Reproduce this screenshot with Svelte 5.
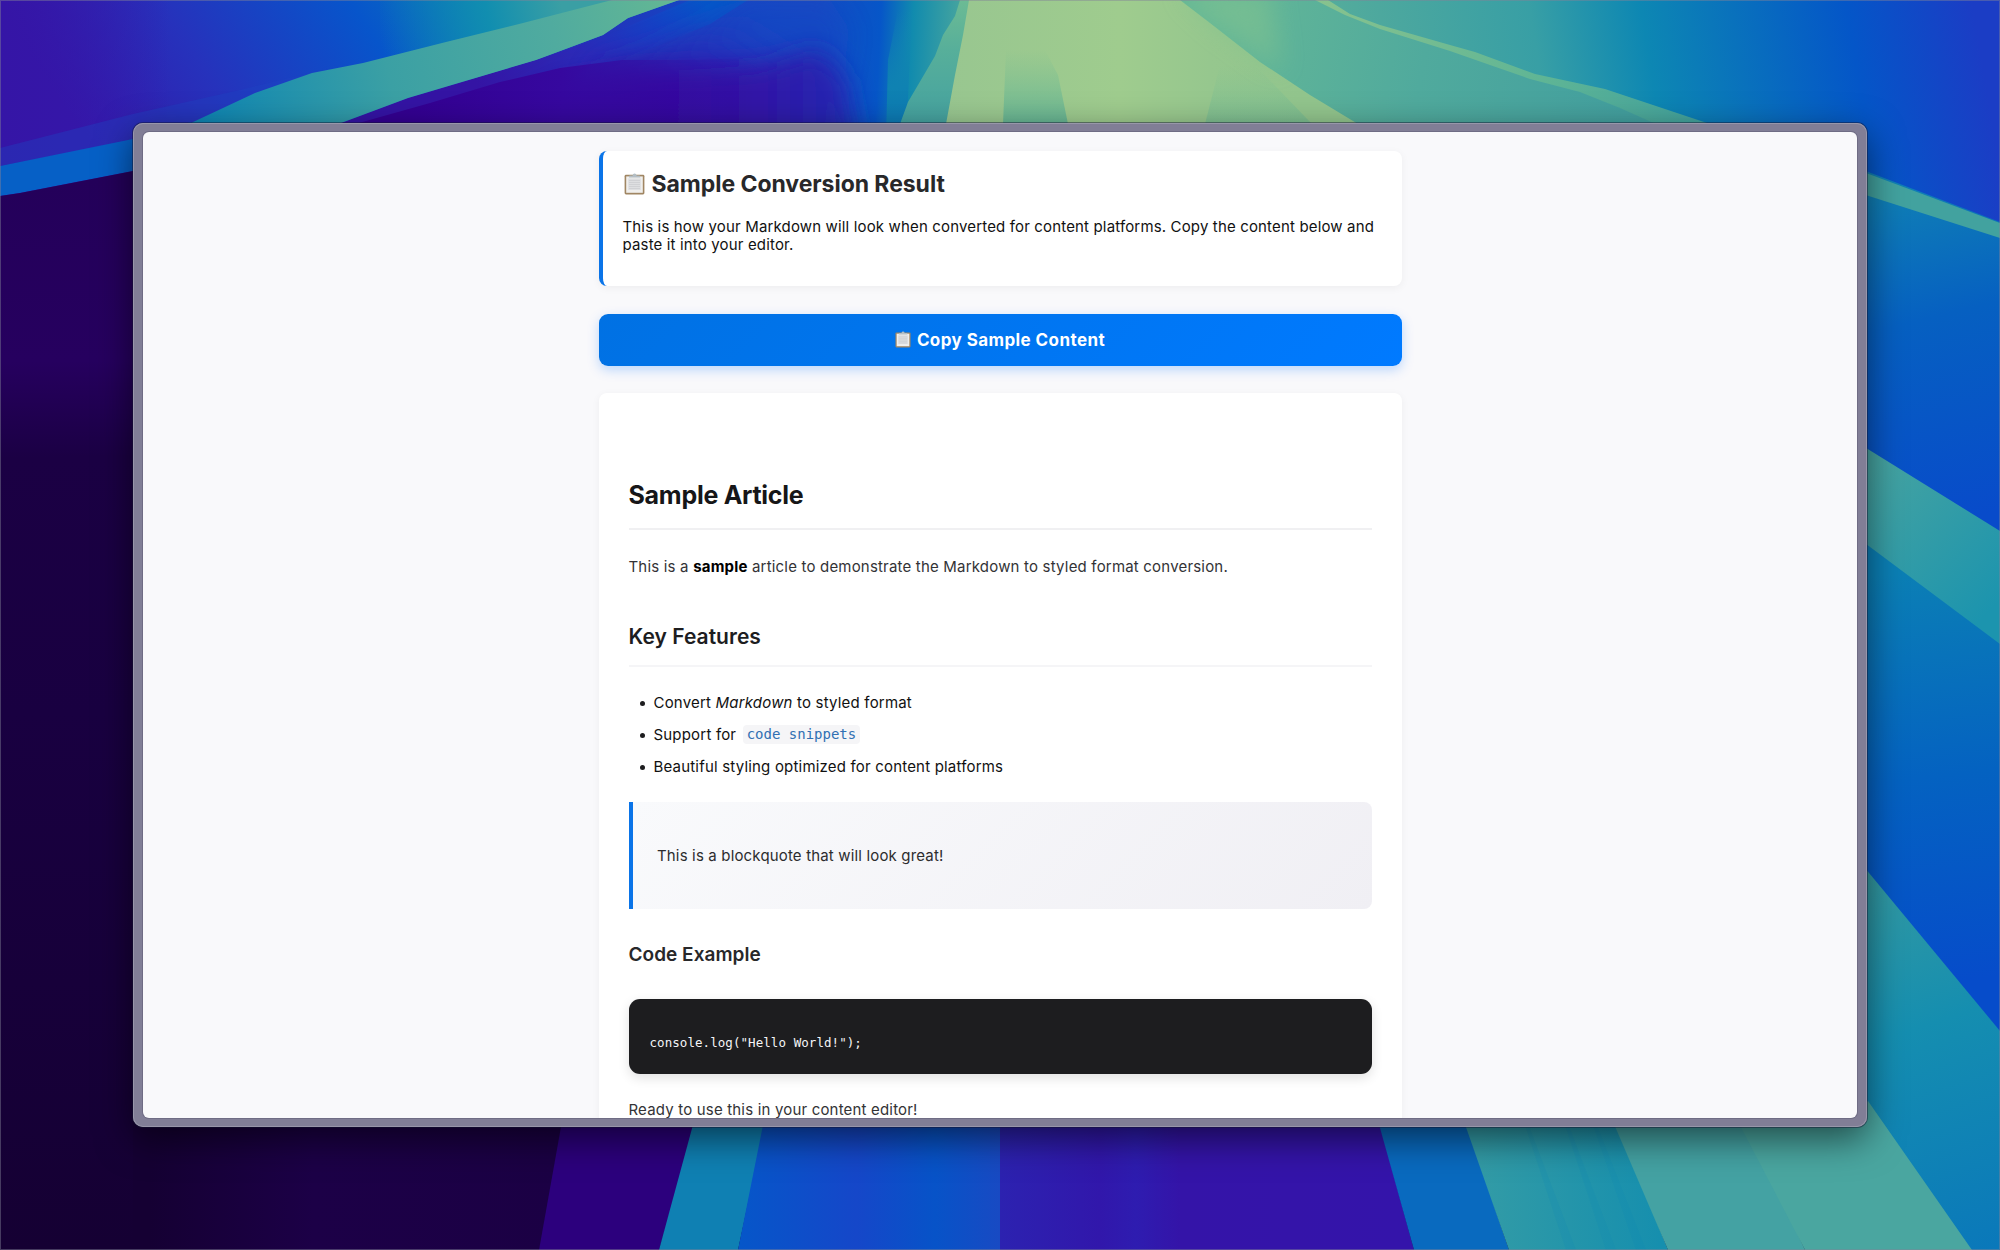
<script>
  const streaks = [
    [1520, 1570], [1560, 1610], [1588, 1640]
  ];
</script>

{#snippet clipboard()}
  <svg class="clip" viewBox="0 0 21 22" aria-hidden="true">
    <rect x="0.6" y="1.8" width="19.8" height="19.6" rx="1.4" fill="#a08663" />
    <rect x="2.2" y="3.4" width="16.6" height="16.4" fill="#f0efed" />
    <rect x="4.2" y="5.4" width="12.6" height="11.6" fill="#dedfe1" />
    <path d="M5 7.5h11M5 9.5h11M5 11.5h11M5 13.5h11M5 15.5h11" stroke="#d0d1d4" stroke-width="1" />
    <path d="M5 4.6V3.2q0-.8.9-.8h2.7q.2-1.8 2-1.8t2 1.8h2.7q.9 0 .9.8v1.4z" fill="#b4bec4" />
  </svg>
{/snippet}

<div class="desktop">
  <svg class="wallpaper" viewBox="0 0 2000 1250" preserveAspectRatio="none" aria-hidden="true">
    <defs>
      <linearGradient id="nw" gradientUnits="userSpaceOnUse" x1="120" y1="190" x2="500" y2="-60">
        <stop offset="0" stop-color="#3518ab" /><stop offset=".3" stop-color="#2632bc" />
        <stop offset=".65" stop-color="#0755cb" /><stop offset="1" stop-color="#0c86b2" />
      </linearGradient>
      <linearGradient id="nwleft"><stop offset="0" stop-color="#3515a6" /><stop offset="1" stop-color="#3515a6" stop-opacity="0" /></linearGradient>
      <linearGradient id="nwteal" gradientUnits="userSpaceOnUse" x1="380" y1="40" x2="560" y2="0">
        <stop offset="0" stop-color="#0c86b2" stop-opacity="0" /><stop offset=".6" stop-color="#118eb0" /><stop offset="1" stop-color="#3a9fa4" />
      </linearGradient>
      <linearGradient id="band" gradientUnits="userSpaceOnUse" x1="200" y1="120" x2="670" y2="0">
        <stop offset="0" stop-color="#0e86b4" /><stop offset=".4" stop-color="#3ba0a4" />
        <stop offset=".75" stop-color="#50ab9f" /><stop offset="1" stop-color="#63b794" />
      </linearGradient>
      <linearGradient id="mid" gradientUnits="userSpaceOnUse" x1="600" y1="0" x2="960" y2="18">
        <stop offset="0" stop-color="#2332bb" /><stop offset=".25" stop-color="#1546c3" />
        <stop offset=".6" stop-color="#164ac2" /><stop offset=".78" stop-color="#0656c8" />
        <stop offset=".87" stop-color="#118bae" /><stop offset="1" stop-color="#45a49f" />
      </linearGradient>
      <linearGradient id="fan" gradientUnits="userSpaceOnUse" x1="480" y1="90" x2="700" y2="-10">
        <stop offset="0" stop-color="#3414a4" /><stop offset=".45" stop-color="#2b2ab8" />
        <stop offset=".75" stop-color="#1740c4" /><stop offset="1" stop-color="#0656c8" />
      </linearGradient>
      <linearGradient id="sheet" gradientUnits="userSpaceOnUse" x1="650" y1="100" x2="720" y2="-10">
        <stop offset="0" stop-color="#3216a8" /><stop offset=".55" stop-color="#2a28b7" /><stop offset="1" stop-color="#1546c5" stop-opacity=".6" />
      </linearGradient>
      <linearGradient id="deep" gradientUnits="userSpaceOnUse" x1="400" y1="0" x2="760" y2="0">
        <stop offset="0" stop-color="#330091" /><stop offset=".45" stop-color="#36089f" /><stop offset="1" stop-color="#3216a8" stop-opacity="0" />
      </linearGradient>
      <linearGradient id="violet" gradientUnits="userSpaceOnUse" x1="340" y1="0" x2="890" y2="0">
        <stop offset="0" stop-color="#2e0085" /><stop offset=".55" stop-color="#36009a" />
        <stop offset=".75" stop-color="#3214a6" /><stop offset=".92" stop-color="#2429b3" />
        <stop offset="1" stop-color="#154bc3" />
      </linearGradient>
      <linearGradient id="inlet" x1="0" y1="0" x2="0" y2="1"><stop offset="0" stop-color="#128aae" stop-opacity="0" /><stop offset=".6" stop-color="#0f82b2" /><stop offset="1" stop-color="#0b76b6" /></linearGradient>
      <linearGradient id="strip" x1="0" y1="0" x2="0" y2="1"><stop offset="0" stop-color="#6cbb94" /><stop offset=".4" stop-color="#57af9a" /><stop offset="1" stop-color="#45a2a0" /></linearGradient>
      <linearGradient id="ne" gradientUnits="userSpaceOnUse" x1="1190" y1="60" x2="1960" y2="-70">
        <stop offset="0" stop-color="#68b996" /><stop offset=".25" stop-color="#4da89e" />
        <stop offset=".44" stop-color="#389fa5" /><stop offset=".58" stop-color="#0d87b3" />
        <stop offset=".84" stop-color="#0456c8" /><stop offset="1" stop-color="#1b3dc5" />
      </linearGradient>
      <linearGradient id="under" gradientUnits="userSpaceOnUse" x1="1200" y1="40" x2="1640" y2="120">
        <stop offset="0" stop-color="#66b896" /><stop offset=".5" stop-color="#50aa9d" /><stop offset="1" stop-color="#429f9f" />
      </linearGradient>
      <linearGradient id="green" gradientUnits="userSpaceOnUse" x1="940" y1="0" x2="1300" y2="0">
        <stop offset="0" stop-color="#98c690" /><stop offset=".5" stop-color="#9fcc8e" />
        <stop offset=".75" stop-color="#96c78e" /><stop offset="1" stop-color="#92c58d" />
      </linearGradient>
      <linearGradient id="patch" x1="0" y1="0" x2="0" y2="1">
        <stop offset="0" stop-color="#78bf92" stop-opacity="0" /><stop offset="1" stop-color="#66b594" />
      </linearGradient>
      <linearGradient id="line" gradientUnits="userSpaceOnUse" x1="1315" y1="0" x2="1700" y2="120">
        <stop offset="0" stop-color="#88c38e" /><stop offset=".6" stop-color="#5fb595" /><stop offset="1" stop-color="#42a39e" />
      </linearGradient>
      <linearGradient id="west" gradientUnits="userSpaceOnUse" x1="0" y1="180" x2="20" y2="1250">
        <stop offset="0" stop-color="#24005a" /><stop offset=".17" stop-color="#26005f" />
        <stop offset=".26" stop-color="#1b0044" /><stop offset=".5" stop-color="#190041" />
        <stop offset="1" stop-color="#150033" />
      </linearGradient>
      <linearGradient id="e1" gradientUnits="userSpaceOnUse" x1="1880" y1="190" x2="1960" y2="520">
        <stop offset="0" stop-color="#1080b5" /><stop offset=".4" stop-color="#0660c1" /><stop offset="1" stop-color="#084bca" />
      </linearGradient>
      <linearGradient id="e2" gradientUnits="userSpaceOnUse" x1="1870" y1="470" x2="2000" y2="600">
        <stop offset="0" stop-color="#45a3a1" /><stop offset="1" stop-color="#1c94ae" />
      </linearGradient>
      <linearGradient id="e3" gradientUnits="userSpaceOnUse" x1="1920" y1="570" x2="1970" y2="980">
        <stop offset="0" stop-color="#0b7fb5" /><stop offset=".5" stop-color="#0462c1" /><stop offset="1" stop-color="#064cca" />
      </linearGradient>
      <linearGradient id="e4" gradientUnits="userSpaceOnUse" x1="1868" y1="880" x2="1990" y2="1250">
        <stop offset="0" stop-color="#3299a2" /><stop offset=".4" stop-color="#158eb0" /><stop offset="1" stop-color="#0a78ba" />
      </linearGradient>
      <linearGradient id="s1" gradientUnits="userSpaceOnUse" x1="150" y1="0" x2="560" y2="0">
        <stop offset="0" stop-color="#150033" /><stop offset=".4" stop-color="#1c0047" /><stop offset="1" stop-color="#1b0044" />
      </linearGradient>
      <linearGradient id="s2" gradientUnits="userSpaceOnUse" x1="740" y1="0" x2="1000" y2="0">
        <stop offset="0" stop-color="#0656c9" /><stop offset=".45" stop-color="#1547c9" />
        <stop offset=".75" stop-color="#0753c8" /><stop offset="1" stop-color="#184ac3" />
      </linearGradient>
      <linearGradient id="s3" gradientUnits="userSpaceOnUse" x1="1000" y1="0" x2="1400" y2="0">
        <stop offset="0" stop-color="#2c22b0" /><stop offset=".25" stop-color="#3117ab" />
        <stop offset=".34" stop-color="#2e1cb0" /><stop offset=".45" stop-color="#3414a8" /><stop offset="1" stop-color="#3414aa" />
      </linearGradient>
      <linearGradient id="s4" gradientUnits="userSpaceOnUse" x1="1480" y1="0" x2="1660" y2="0">
        <stop offset="0" stop-color="#329ba6" /><stop offset="1" stop-color="#168fae" />
      </linearGradient>
      <filter id="soft" x="-30%" y="-30%" width="160%" height="160%"><feGaussianBlur stdDeviation="12" /></filter>
    </defs>

    <!-- upper left -->
    <rect width="700" height="240" fill="url(#nw)" />
    <rect x="380" width="300" height="80" fill="url(#nwteal)" />
    <rect width="170" height="240" fill="url(#nwleft)" />
    <path d="M0 148L133 114L240 90L330 68L191 123L133 140L0 166Z" fill="#1f44c4" opacity=".4" />
    <path d="M0 166L133 139L191 122V165L133 171L20 193L0 196Z" fill="#0660c6" />

    <!-- centre fan -->
    <path d="M679 0L628 18L603 35L536 60L408 98L341 123V140H970V0Z" fill="url(#mid)" />
    <path d="M748 0L710 24L640 53L590 65L500 140H341V123L408 98L536 60L603 37L690 0Z" fill="url(#fan)" />
    <path d="M748 0L710 24L640 53L600 62L560 140H830L850 30L830 0Z" fill="url(#sheet)" opacity=".7" filter="url(#soft)" />
    <path d="M440 150L560 85L640 72L760 66L820 50L846 80L864 180H400Z" fill="url(#violet)" filter="url(#soft)" />
    <path d="M320 150L341 128L430 103L500 82L560 68L622 60L690 60L765 58V150Z" fill="url(#deep)" />
    <path d="M898 10L912 10L906 140H886L888 60Z" fill="url(#inlet)" />
    <path d="M679 0H612L523 23L446 42L363 63L312 73L255 93L191 123L150 150H300L341 123L408 98L536 60L603 35L628 18L679 0Z" fill="url(#band)" />
    <path d="M960 0L955 16L943 35L935 56L918 85L908 102L900 124H980V0Z" fill="url(#strip)" />

    <!-- upper right -->
    <path d="M1160 0H2000V540H1200Z" fill="url(#ne)" />
    <path d="M1180 0H1315L1380 26L1440 44L1500 65L1580 91L1660 124H1200Z" fill="url(#under)" />
    <path d="M1328 0L1350 14L1380 25L1450 45L1475 52L1535 74L1605 89L1650 104L1710 124H1656L1620 108L1580 92L1530 79L1490 65L1450 51L1380 29L1345 15L1315 0Z" fill="url(#line)" />
    <path d="M969 0H1180L1210 23L1260 62L1310 95L1358 124H946L955 75L963 35Z" fill="url(#green)" />
    <path d="M1180 -10H1270L1280 70L1215 23Z" fill="#80c290" opacity=".6" filter="url(#soft)" />
    <path d="M1006 50H1045L1058 75L1068 124H1003Z" fill="url(#patch)" />
    <path d="M1220 65H1255L1312 124H1205Z" fill="url(#patch)" opacity=".5" />

    <!-- right side -->
    <path d="M1850 165L2000 222V560L1850 460Z" fill="url(#e1)" />
    <path d="M1850 167L2000 223V238L1850 190Z" fill="#42a29f" />
    <path d="M1850 438L2000 531V660L1850 550Z" fill="url(#e2)" />
    <path d="M1850 532L2000 644V1060H1850Z" fill="url(#e3)" />
    <path d="M1850 850L2000 1031V1250H1850Z" fill="url(#e4)" />

    <!-- left side -->
    <path d="M0 196L20 193L133 171H160V1250H0Z" fill="url(#west)" />

    <!-- lower edge -->
    <path d="M133 1110H570L539 1250H133Z" fill="url(#s1)" />
    <path d="M564 1110H700L659 1250H539Z" fill="#2c007d" />
    <path d="M697 1110H768L738 1250H659Z" fill="#0f80b3" />
    <path d="M766 1110H1000V1250H738Z" fill="url(#s2)" />
    <path d="M1000 1110H1376L1414 1250H1000Z" fill="url(#s3)" />
    <path d="M1375 1110H1462L1509 1250H1414Z" fill="#096abf" />
    <path d="M1460 1110H1612L1668 1250H1509Z" fill="url(#s4)" />
    <path d="M1608 1110H1740L1805 1250H1668Z" fill="#44a2a3" />
    <path d="M1732 1110H1855L1868 1101L1972 1250H1805Z" fill="#4aa6a0" />
    {#each streaks as [top, bottom]}
      <path d="M{top} 1110h3L{bottom + 6} 1250h-10z" fill="#0780bd" opacity=".13" />
    {/each}
  </svg>

  <main class="window">
    <div class="page">
      <section class="notice">
        <h2>{@render clipboard()}<span>Sample Conversion Result</span></h2>
        <p>This is how your Markdown will look when converted for content platforms. Copy the content below and<br />paste it into your editor.</p>
      </section>

      <button class="copy">{@render clipboard()}<span>Copy Sample Content</span></button>

      <article>
        <h1>Sample Article</h1>
        <p class="lead">This is a <strong>sample</strong> article to demonstrate the Markdown to styled format conversion.</p>
        <h2>Key Features</h2>
        <ul>
          <li>Convert <em>Markdown</em> to styled format</li>
          <li>Support for <code>code snippets</code></li>
          <li>Beautiful styling optimized for content platforms</li>
        </ul>
        <blockquote>This is a blockquote that will look great!</blockquote>
        <h3>Code Example</h3>
        <pre>console.log("Hello World!");</pre>
        <p class="ready">Ready to use this in your content editor!</p>
      </article>
    </div>
  </main>
</div>

<style>
  :global(body) { margin: 0; overflow: hidden; }
  .desktop {
    position: relative;
    width: 2000px;
    height: 1250px;
    box-sizing: border-box;
    padding: 123px 133px;
    overflow: hidden;
    background: #170038;
    font-family: Inter, "Liberation Sans", sans-serif;
  }
  .desktop::after {
    content: "";
    position: absolute;
    inset: 0;
    border: 1.5px solid rgba(130, 130, 150, 0.45);
    pointer-events: none;
  }
  .wallpaper { position: absolute; inset: 0; width: 100%; height: 100%; }
  .window {
    position: relative;
    box-sizing: border-box;
    height: 1004px;
    padding: 9px 10px;
    border-radius: 10px;
    background: #817e96;
    box-shadow: inset 0 0 0 1px #9896a9, 0 0 0 1px rgba(20, 20, 50, 0.45), 0 12px 36px rgba(0, 0, 0, 0.55);
  }
  .page {
    box-sizing: border-box;
    height: 986px;
    padding: 19px 455.5px 0;
    overflow: hidden;
    border-radius: 6px;
    background: #f9f9fb;
    box-shadow: 0 0 0 1px #6f6c84;
  }
  h1, h2, h3, p, ul, blockquote, pre { margin: 0; }
  .clip { display: block; flex: none; }

  .notice {
    box-sizing: border-box;
    height: 135px;
    padding: 17px 20px 0 20px;
    border-left: 4px solid #0a74e8;
    border-radius: 8px;
    background: #fff;
    box-shadow: 0 2px 8px rgba(0, 0, 0, 0.05);
  }
  .notice h2 {
    display: flex;
    align-items: center;
    gap: 7px;
    height: 32px;
    padding-left: 1px;
    font-size: 23px;
    font-weight: 700;
    letter-spacing: -0.05px;
    color: #28282a;
  }
  .notice .clip { width: 21px; height: 22px; }
  .notice p { margin-top: 18px; font-size: 15px; line-height: 18px; letter-spacing: 0.155px; white-space: nowrap; color: #111; }

  .copy {
    display: flex;
    align-items: center;
    justify-content: center;
    gap: 6px;
    width: 100%;
    height: 52px;
    margin: 28px 0 27px;
    padding: 0;
    border: 0;
    border-radius: 9px;
    background: linear-gradient(135deg, #0071e3, #007aff);
    box-shadow: 0 4px 12px rgba(0, 113, 255, 0.25);
    font: 700 17px Inter, sans-serif;
    letter-spacing: 0.42px;
    color: #fff;
  }
  .copy .clip { width: 16px; height: 17px; margin-bottom: 1px; }

  article {
    box-sizing: border-box;
    height: 800px;
    padding: 80.5px 30px 0;
    border-radius: 8px;
    background: #fff;
    box-shadow: 0 2px 8px rgba(0, 0, 0, 0.05);
    letter-spacing: 0.19px;
  }
  h1 {
    box-sizing: border-box;
    height: 56px;
    border-bottom: 2px solid #f0f0f2;
    font-size: 25px;
    line-height: 43px;
    font-weight: 700;
    letter-spacing: -0.27px;
    color: #161618;
  }
  .lead { margin-top: 24px; height: 27px; line-height: 26px; font-size: 15px; color: #333336; }
  .lead strong { color: #000; font-weight: 700; }
  article h2 {
    box-sizing: border-box;
    height: 48px;
    margin-top: 38.5px;
    border-bottom: 2px solid #f5f5f7;
    font-size: 21px;
    line-height: 35px;
    font-weight: 600;
    letter-spacing: 0.03px;
    color: #1d1d1f;
  }
  ul { margin-top: 20px; padding: 0; list-style: none; }
  li { display: flex; align-items: center; height: 31.7px; font-size: 15px; color: #111; white-space: pre; }
  li::before { content: ""; width: 5px; height: 5px; margin: 2px 9px 0 11px; border-radius: 50%; background: #1d1d1f; }
  li code {
    height: 19px;
    margin-left: 2px;
    padding: 0 4px;
    border-radius: 4px;
    background: #f5f5f7;
    font: 14px/19px "DejaVu Sans Mono", monospace;
    letter-spacing: 0;
    color: #3070b3;
  }
  blockquote {
    box-sizing: border-box;
    height: 107px;
    margin-top: 19.5px;
    padding-left: 24.5px;
    border-left: 4px solid #0a74e8;
    border-radius: 0 8px 8px 0;
    background: linear-gradient(135deg, #f9fafc, #f0eff4);
    font-size: 15px;
    line-height: 108px;
    letter-spacing: 0.16px;
    color: #2c2c2e;
  }
  h3 { height: 30px; margin-top: 31px; font-size: 19px; line-height: 30px; font-weight: 600; letter-spacing: 0.03px; color: #28282a; }
  pre {
    box-sizing: border-box;
    height: 75px;
    margin-top: 29px;
    padding: 33px 21px 0;
    border-radius: 11px;
    background: #1d1d1f;
    box-shadow: 0 4px 12px rgba(0, 0, 0, 0.12);
    font: 12.5px/22px "DejaVu Sans Mono", monospace;
    letter-spacing: 0.06px;
    color: #f5f5f7;
  }
  .ready { margin-top: 23px; font-size: 15px; line-height: 26px; letter-spacing: 0.18px; color: #333336; }
</style>
